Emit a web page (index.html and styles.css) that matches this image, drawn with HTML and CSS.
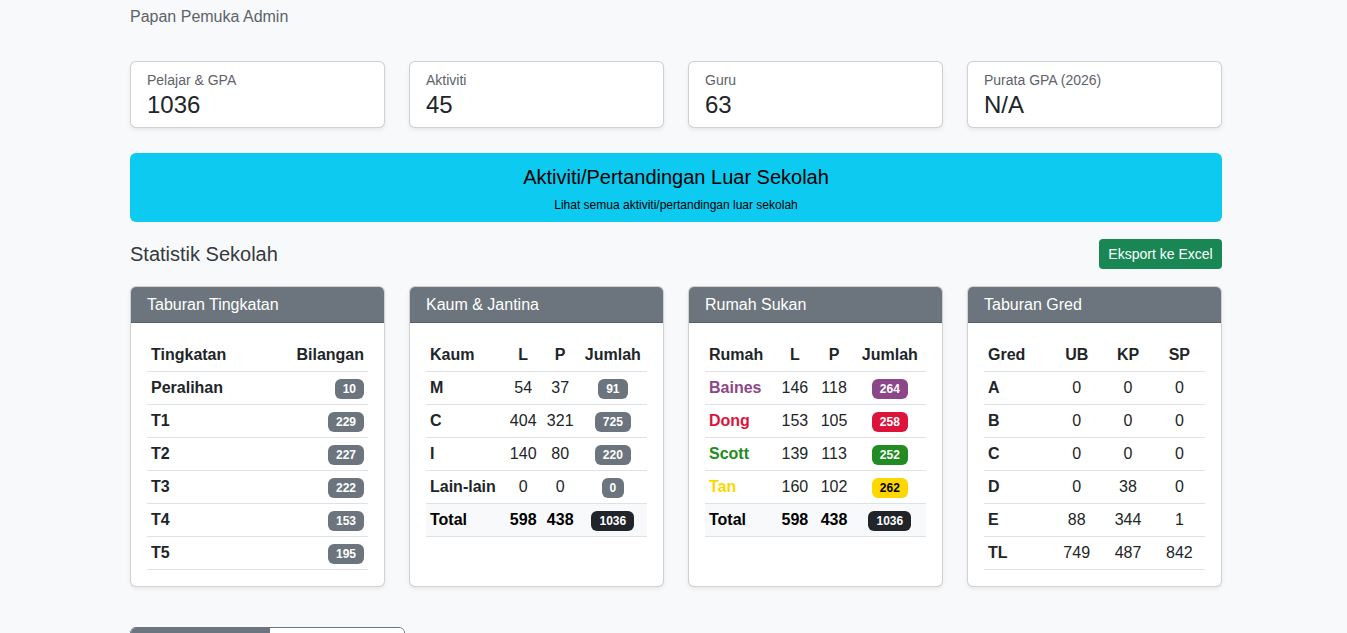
FILE: index.html
```html
<!DOCTYPE html>
<html lang="ms">
<head>
<meta charset="utf-8">
<title>Papan Pemuka Admin</title>
<link rel="stylesheet" href="styles.css">
</head>
<body>
<div class="container">
  <div class="page-title">Papan Pemuka Admin</div>

  <div class="stats">
    <div class="stat-card"><div class="stat-label">Pelajar &amp; GPA</div><div class="stat-value">1036</div></div>
    <div class="stat-card"><div class="stat-label">Aktiviti</div><div class="stat-value">45</div></div>
    <div class="stat-card"><div class="stat-label">Guru</div><div class="stat-value">63</div></div>
    <div class="stat-card"><div class="stat-label">Purata GPA (2026)</div><div class="stat-value">N/A</div></div>
  </div>

  <div class="banner">
    <div class="banner-title">Aktiviti/Pertandingan Luar Sekolah</div>
    <div class="banner-sub">Lihat semua aktiviti/pertandingan luar sekolah</div>
  </div>

  <div class="section-head">
    <div class="section-title">Statistik Sekolah</div>
    <button class="btn-export">Eksport ke Excel</button>
  </div>

  <div class="tables">
    <div class="tcard">
      <div class="tcard-head">Taburan Tingkatan</div>
      <div class="tcard-body">
        <table class="tbl">
          <thead><tr><th class="l">Tingkatan</th><th class="r">Bilangan</th></tr></thead>
          <tbody>
            <tr><th class="l">Peralihan</th><td class="r"><span class="badge">10</span></td></tr>
            <tr><th class="l">T1</th><td class="r"><span class="badge">229</span></td></tr>
            <tr><th class="l">T2</th><td class="r"><span class="badge">227</span></td></tr>
            <tr><th class="l">T3</th><td class="r"><span class="badge">222</span></td></tr>
            <tr><th class="l">T4</th><td class="r"><span class="badge">153</span></td></tr>
            <tr><th class="l">T5</th><td class="r"><span class="badge">195</span></td></tr>
          </tbody>
        </table>
      </div>
    </div>

    <div class="tcard">
      <div class="tcard-head">Kaum &amp; Jantina</div>
      <div class="tcard-body">
        <table class="tbl">
          <thead><tr><th class="l">Kaum</th><th>L</th><th>P</th><th>Jumlah</th></tr></thead>
          <tbody>
            <tr><th class="l">M</th><td>54</td><td>37</td><td><span class="badge">91</span></td></tr>
            <tr><th class="l">C</th><td>404</td><td>321</td><td><span class="badge">725</span></td></tr>
            <tr><th class="l">I</th><td>140</td><td>80</td><td><span class="badge">220</span></td></tr>
            <tr><th class="l">Lain-lain</th><td>0</td><td>0</td><td><span class="badge">0</span></td></tr>
            <tr class="total"><th class="l">Total</th><th>598</th><th>438</th><th><span class="badge dark">1036</span></th></tr>
          </tbody>
        </table>
      </div>
    </div>

    <div class="tcard">
      <div class="tcard-head">Rumah Sukan</div>
      <div class="tcard-body">
        <table class="tbl">
          <thead><tr><th class="l">Rumah</th><th>L</th><th>P</th><th>Jumlah</th></tr></thead>
          <tbody>
            <tr><th class="l baines">Baines</th><td>146</td><td>118</td><td><span class="badge b-baines">264</span></td></tr>
            <tr><th class="l dong">Dong</th><td>153</td><td>105</td><td><span class="badge b-dong">258</span></td></tr>
            <tr><th class="l scott">Scott</th><td>139</td><td>113</td><td><span class="badge b-scott">252</span></td></tr>
            <tr><th class="l tan">Tan</th><td>160</td><td>102</td><td><span class="badge b-tan">262</span></td></tr>
            <tr class="total"><th class="l">Total</th><th>598</th><th>438</th><th><span class="badge dark">1036</span></th></tr>
          </tbody>
        </table>
      </div>
    </div>

    <div class="tcard">
      <div class="tcard-head">Taburan Gred</div>
      <div class="tcard-body">
        <table class="tbl">
          <thead><tr><th class="l">Gred</th><th>UB</th><th>KP</th><th>SP</th></tr></thead>
          <tbody>
            <tr><th class="l">A</th><td>0</td><td>0</td><td>0</td></tr>
            <tr><th class="l">B</th><td>0</td><td>0</td><td>0</td></tr>
            <tr><th class="l">C</th><td>0</td><td>0</td><td>0</td></tr>
            <tr><th class="l">D</th><td>0</td><td>38</td><td>0</td></tr>
            <tr><th class="l">E</th><td>88</td><td>344</td><td>1</td></tr>
            <tr><th class="l">TL</th><td>749</td><td>487</td><td>842</td></tr>
          </tbody>
        </table>
      </div>
    </div>
  </div>

  <div class="btn-group">
    <button class="seg active">Pelajar</button>
    <button class="seg">Guru</button>
  </div>
</div>
</body>
</html>
```

FILE: styles.css
```css
* { box-sizing: border-box; }
html, body { margin: 0; }
body {
  background: #f8f9fa;
  font-family: "Liberation Sans", Arial, sans-serif;
  color: #212529;
  padding-left: 5px;
}
.container {
  width: 1092px;
  margin: 0 auto;
  padding-top: 6px;
}
.page-title {
  font-size: 16px;
  line-height: 22px;
  color: #5c636a;
}
.stats {
  display: grid;
  grid-template-columns: repeat(4, 1fr);
  gap: 24px;
  margin-top: 33px;
}
.stat-card {
  background: #fff;
  border: 1px solid rgba(0,0,0,0.18);
  border-radius: 6px;
  box-shadow: 0 2px 4px rgba(0,0,0,0.075);
  padding: 9px 16px 8px;
  height: 67px;
}
.stat-label {
  font-size: 14px;
  line-height: 18px;
  color: #5c636a;
  margin-bottom: 1px;
}
.stat-value {
  font-size: 24px;
  line-height: 30px;
  color: #212529;
}
.banner {
  margin-top: 25px;
  background: #0dcaf0;
  border-radius: 6px;
  height: 69px;
  padding-top: 12px;
  text-align: center;
  color: #000;
}
.banner-title {
  font-size: 20px;
  line-height: 24px;
  margin-bottom: 7px;
}
.banner-sub {
  font-size: 12px;
  line-height: 18px;
}
.section-head {
  display: flex;
  justify-content: space-between;
  align-items: center;
  margin-top: 17px;
}
.section-title {
  font-size: 20px;
  line-height: 30px;
  color: #343a40;
}
.btn-export {
  font-family: inherit;
  background: #198754;
  color: #fff;
  border: 0;
  border-radius: 4px;
  font-size: 14px;
  height: 30px;
  width: 123px;
  padding: 0;
}
.tables {
  display: grid;
  grid-template-columns: repeat(4, 1fr);
  gap: 24px;
  margin-top: 17px;
}
.tcard {
  background: #fff;
  border: 1px solid rgba(0,0,0,0.18);
  border-radius: 6px;
  box-shadow: 0 2px 4px rgba(0,0,0,0.075);
  overflow: hidden;
}
.tcard-head {
  background: #6c757d;
  color: #fff;
  font-size: 16px;
  line-height: 24px;
  padding: 6px 16px 5px;
  border-bottom: 1px solid rgba(0,0,0,0.18);
}
.tcard-body {
  padding: 16px;
}
.tbl {
  width: 100%;
  border-collapse: collapse;
  font-size: 16px;
}
.tbl th, .tbl td {
  padding: 4px;
  line-height: 24px;
  border-bottom: 1px solid #dee2e6;
  text-align: center;
  vertical-align: middle;
}
.tbl th { font-weight: bold; }
.tbl td { font-weight: normal; }
.tbl .l { text-align: left; }
.tbl .r { text-align: right; }
.tbl tr.total th { background: #f8f9fa; color: #000; }
.badge {
  display: inline-block;
  background: #6c757d;
  color: #fff;
  font-size: 12px;
  font-weight: bold;
  line-height: 12px;
  padding: 4px 8px;
  border-radius: 6px;
  vertical-align: middle;
}
.badge.dark { background: #212529; }
.baines { color: #8b4789; }
.dong { color: #dc143c; }
.scott { color: #228b22; }
.tan { color: #ffd700; }
.b-baines { background: #8b4789; }
.b-dong { background: #dc143c; }
.b-scott { background: #228b22; }
.b-tan { background: #ffd700; color: #000; }
.btn-group {
  display: inline-flex;
  margin-top: 40px;
  border: 1px solid #6c757d;
  border-radius: 6px;
  overflow: hidden;
}
.seg {
  font-family: inherit;
  font-size: 16px;
  height: 46px;
  padding-top: 10px;
  border: 0;
  background: #fff;
  color: #6c757d;
  width: 134px;
}
.seg.active {
  background: #6c757d;
  color: #fff;
  width: 139px;
}
```
